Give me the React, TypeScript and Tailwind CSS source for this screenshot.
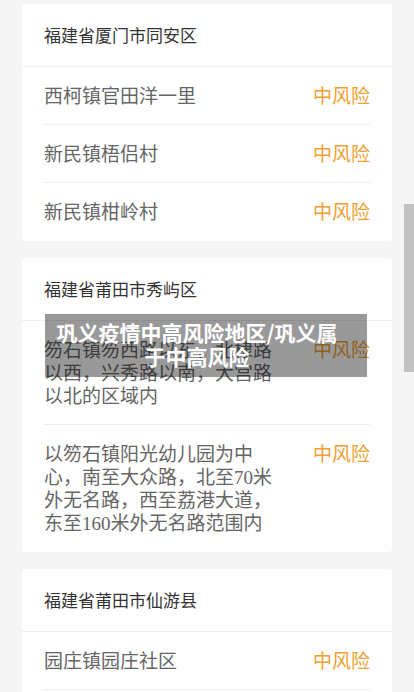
const font = { fontFamily: '"Noto Sans CJK SC", "Noto Sans", sans-serif' };
// 参考图里的数字是衬线体
const rowFont = { fontFamily: '"Liberation Serif", "Noto Sans CJK SC", serif' };

type Item = { name: string; level: string };
type Area = { title: string; items: Item[] };

const areas: Area[] = [
  {
    title: "福建省厦门市同安区",
    items: [
      { name: "西柯镇官田洋一里", level: "中风险" },
      { name: "新民镇梧侣村", level: "中风险" },
      { name: "新民镇柑岭村", level: "中风险" },
    ],
  },
  {
    title: "福建省莆田市秀屿区",
    items: [
      { name: "笏石镇笏西路以东，北棣路以西，兴秀路以南，大宫路以北的区域内", level: "中风险" },
      {
        name: "以笏石镇阳光幼儿园为中心，南至大众路，北至70米外无名路，西至荔港大道，东至160米外无名路范围内",
        level: "中风险",
      },
    ],
  },
  {
    title: "福建省莆田市仙游县",
    items: [
      { name: "园庄镇园庄社区", level: "中风险" },
      { name: "园庄镇园庄村", level: "中风险" },
    ],
  },
];

const App = () => (
  <div className="relative w-[414px] h-[692px] overflow-hidden bg-[#f5f5f5]" style={font}>
    {/* 列表 */}
    <div className="flex flex-col gap-[17px] px-[22px] pt-[4px]">
      {areas.map((a, i) => (
        <div key={i} className="bg-white rounded-[4px]">
          <div className="h-[63px] flex items-center px-[22px] text-[17px] text-[#333] border-b border-[#eeeeee]">
            {a.title}
          </div>
          <div className="px-[22px]">
            {a.items.map((it, j) => (
              <div
                key={j}
                style={rowFont}
                className={
                  "flex justify-between items-start leading-[23px] text-[19px] " +
                  (j < a.items.length - 1 ? "pt-[18px] pb-[16px] border-b border-[#eeeeee]" : "pt-[18px] pb-[17px]")
                }
              >
                <span className="w-[228px] text-[#666]">{it.name}</span>
                <span className="text-[#f0a032]">{it.level}</span>
              </div>
            ))}
          </div>
        </div>
      ))}
    </div>

    {/* 标题浮层 */}
    <div className="absolute left-[45px] top-[314px] w-[322px] h-[63px] bg-black/40 pl-[10px] pr-[28px] pt-[6px] text-center text-white font-bold text-[21px] leading-[24px]">
      巩义疫情中高风险地区/巩义属于中高风险
    </div>

    {/* 滚动条 */}
    <div className="absolute right-0 top-[204px] w-[10px] h-[168px] bg-[#c1c1c1]" />
  </div>
);

export default App;
